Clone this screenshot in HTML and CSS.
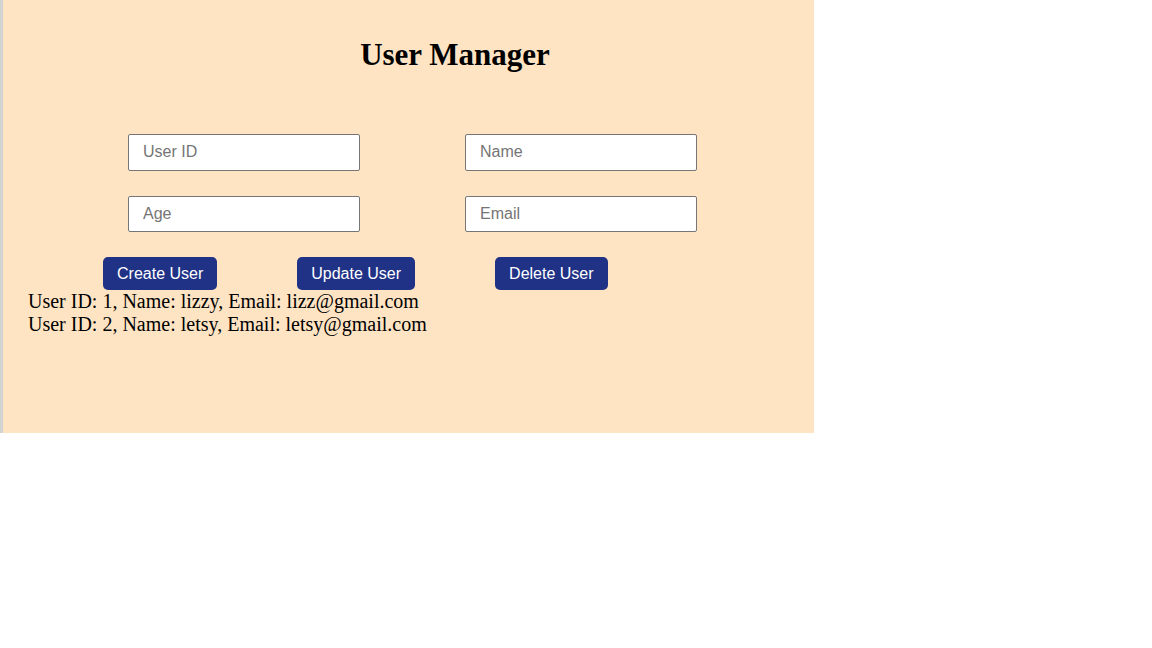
FILE: index.html
```html
<!DOCTYPE html>
<html>
<head>
<meta charset="utf-8">
<link rel="stylesheet" href="styles.css">
</head>
<body>
<div class="app">
  <h1 class="title">User Manager</h1>
  <div class="form-grid">
    <input class="field" type="text" placeholder="User ID">
    <input class="field" type="text" placeholder="Name">
    <input class="field" type="text" placeholder="Age">
    <input class="field" type="text" placeholder="Email">
  </div>
  <div class="actions">
    <button class="btn">Create User</button>
    <button class="btn">Update User</button>
    <button class="btn">Delete User</button>
  </div>
  <div class="user-list">
    <div class="user">User ID: 1, Name: lizzy, Email: lizz@gmail.com</div>
    <div class="user">User ID: 2, Name: letsy, Email: letsy@gmail.com</div>
  </div>
</div>
</body>
</html>
```
FILE: styles.css
```css
html, body {
  margin: 0;
  padding: 0;
  background: #ffffff;
}

body {
  font-family: "Liberation Serif", "Times New Roman", serif;
}

.app {
  box-sizing: border-box;
  width: 814px;
  height: 433px;
  background: #ffe4c4;
  border-left: 3px solid #d3d3d3;
}

.title {
  margin: 0;
  padding: 37px 0 0 93px;
  font-size: 31px;
  font-weight: bold;
  line-height: 36px;
  text-align: center;
  color: #000;
}

.form-grid {
  display: grid;
  grid-template-columns: 232px 232px;
  column-gap: 105px;
  row-gap: 25px;
  padding-left: 125px;
  margin-top: 61px;
}

.field {
  box-sizing: border-box;
  width: 232px;
  height: 36.5px;
  margin: 0;
  padding: 0 14px;
  border: 1px solid #767676;
  border-radius: 2px;
  background: #fff;
  font-family: "Liberation Sans", Arial, sans-serif;
  font-size: 16px;
  color: #000;
}

.field::placeholder {
  color: #757575;
}

.actions {
  display: flex;
  gap: 80px;
  padding-left: 100px;
  margin-top: 25px;
}

.btn {
  box-sizing: border-box;
  height: 33px;
  padding: 0 14px;
  border: none;
  border-radius: 5px;
  background: #1f3286;
  color: #fff;
  font-family: "Liberation Sans", Arial, sans-serif;
  font-size: 16px;
  cursor: pointer;
}

.user-list {
  padding-left: 25px;
  font-size: 20px;
  line-height: 23px;
  color: #000;
}
```
